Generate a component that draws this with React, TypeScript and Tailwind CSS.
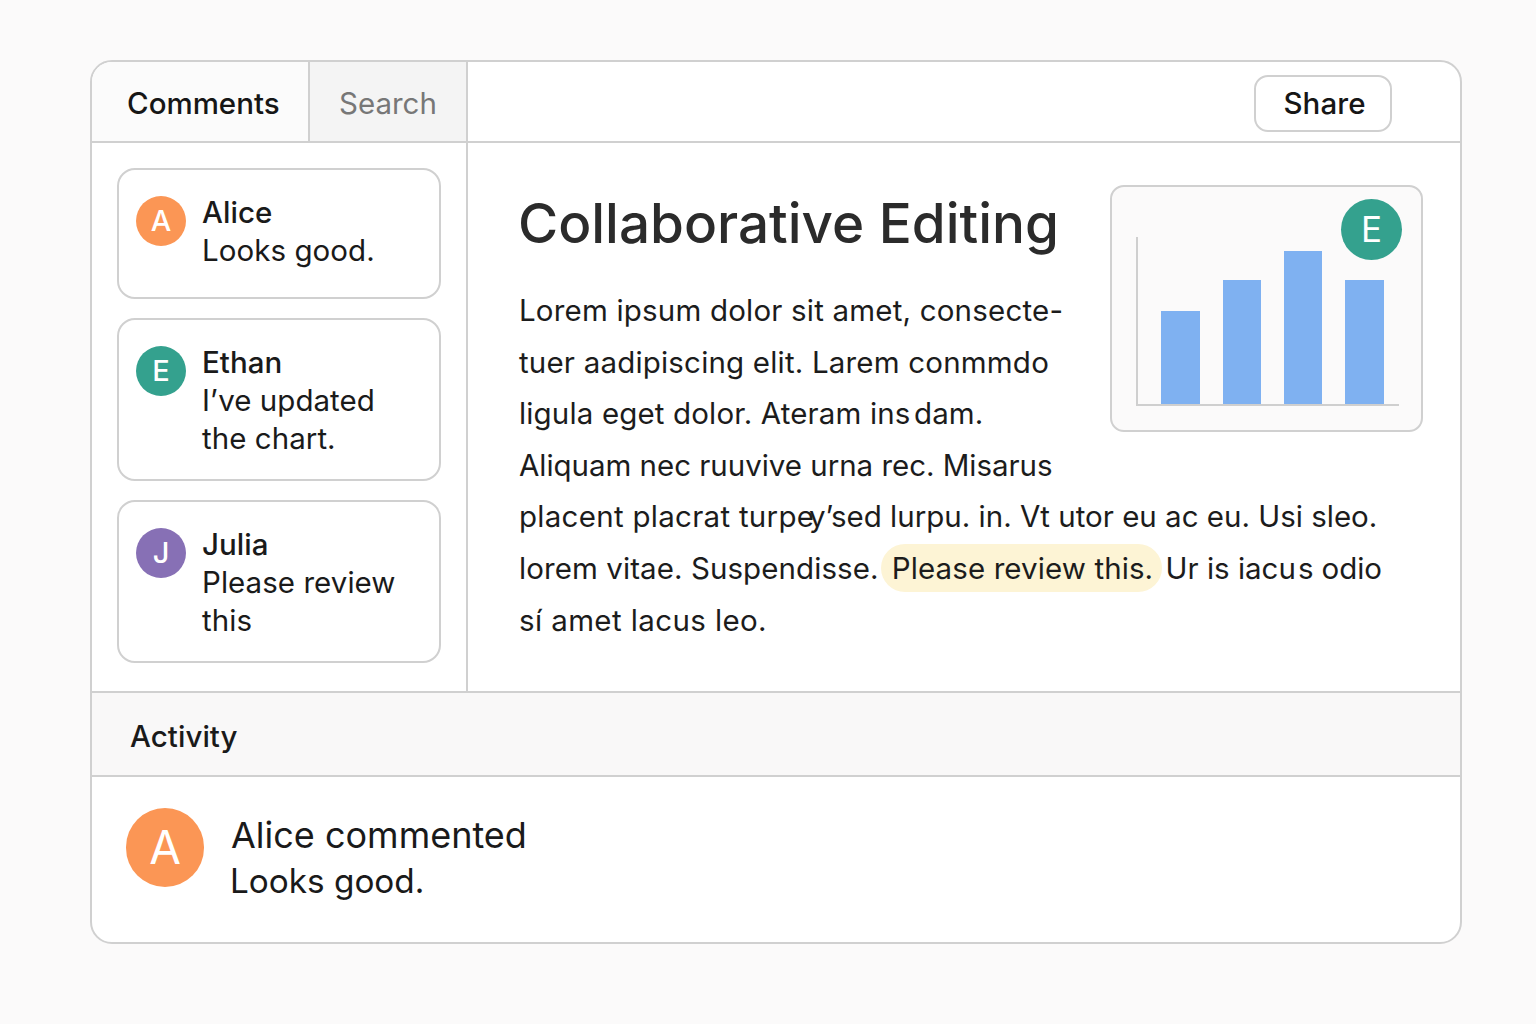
const font = "font-['Inter','Noto_Sans',sans-serif]";

const Avatar = ({ letter, color, size }: { letter: string; color: string; size: string }) => (
  <div className={`flex shrink-0 items-center justify-center rounded-full text-white ${color} ${size}`}>
    {letter}
  </div>
);

const CommentCard = ({ letter, color, name, lines, height }: { letter: string; color: string; name: string; lines: string[]; height: string }) => (
  <div className={`flex rounded-[18px] border-2 border-[#d0d0d0] bg-white pl-[17px] pt-[26px] ${height}`}>
    <Avatar letter={letter} color={color} size="h-[50px] w-[50px] text-[29px] font-medium" />
    <div className="ml-[16px] -mt-[3px] text-[29.5px] leading-[38px] tracking-[0.05px] text-[#1a1a1a]">
      <div className="font-medium">{name}</div>
      {lines.map((line) => (
        <div key={line}>{line}</div>
      ))}
    </div>
  </div>
);

export default function App() {
  return (
    <div className={`h-[1024px] w-[1536px] overflow-hidden bg-[#fbfafa] pl-[90px] pt-[60px] ${font}`}>
      <div className="flex h-[884px] w-[1372px] flex-col overflow-hidden rounded-[22px] border-2 border-[#d0d0d0] bg-white">
        {/* Header */}
        <div className="flex h-[81px] shrink-0 border-b-2 border-[#d0d0d0]">
          <div className="flex w-[218px] items-center border-r-2 border-[#d0d0d0] bg-[#fbfbfb] pl-[35px] pt-[3px] text-[29.5px] font-medium text-[#161616]">
            Comments
          </div>
          <div className="flex w-[158px] items-center border-r-2 border-[#d0d0d0] bg-[#f4f4f4] pl-[29px] pt-[3px] text-[29.5px] text-[#777777]">
            Search
          </div>
          <div className="flex flex-1 items-center justify-end pr-[68px] pt-[3px]">
            <div className="flex h-[57px] w-[138px] items-center justify-center rounded-[14px] border-2 border-[#d0d0d0] pl-[3px] text-[29.5px] font-medium tracking-[0.1px] text-[#161616]">
              Share
            </div>
          </div>
        </div>

        {/* Body */}
        <div className="flex h-[548px] shrink-0">
          <div className="flex w-[376px] shrink-0 flex-col gap-[19px] border-r-2 border-[#d0d0d0] pl-[25px] pr-[25px] pt-[25px]">
            <CommentCard letter="A" color="bg-[#fb9655]" name="Alice" lines={["Looks good."]} height="h-[131px]" />
            <CommentCard letter="E" color="bg-[#34a18e]" name="Ethan" lines={["I’ve updated", "the chart."]} height="h-[163px]" />
            <CommentCard letter="J" color="bg-[#8770b5]" name="Julia" lines={["Please review", "this"]} height="h-[163px]" />
          </div>

          <div className="flex-1 pl-[51px] pt-[43px] text-[29.5px] leading-[51.6px] text-[#1c1c1c]">
            <div className="flex">
              <div className="w-[591px] shrink-0">
                <h1 className="-mt-[1px] mb-[24px] -ml-[1px] text-[54.8px] font-medium leading-[76px] text-[#2b2b2b]">Collaborative Editing</h1>
                <div className="tracking-[0.19px]">Lorem ipsum dolor sit amet, consecte-</div>
                <div className="tracking-[0.19px]">tuer aadipiscing elit. Larem conmmdo</div>
                <div className="tracking-[0.15px]">ligula eget dolor. Ateram in<span className="tracking-[-2.4px]">s </span>dam.</div>
                <div className="tracking-[-0.03px]">Aliquam nec ruuvive urna rec. Misarus</div>
              </div>
              <div className="relative -mt-[1px] h-[247px] w-[313px] shrink-0 rounded-[14px] border-2 border-[#d0d0d0] bg-[#fbfafa]">
                <svg className="h-full w-full" viewBox="0 0 309 243">
                  <rect x="49" y="124" width="39" height="93" fill="#7fb1f1" />
                  <rect x="111" y="93" width="38" height="124" fill="#7fb1f1" />
                  <rect x="172" y="64" width="38" height="153" fill="#7fb1f1" />
                  <rect x="233" y="93" width="39" height="124" fill="#7fb1f1" />
                  <path d="M25 50V218H287" fill="none" stroke="#cfcfcf" strokeWidth="2" />
                </svg>
                <div className="absolute right-[19px] top-[12px]">
                  <Avatar letter="E" color="bg-[#34a18e]" size="h-[61px] w-[61px] text-[35px]" />
                </div>
              </div>
            </div>
            <div className="whitespace-nowrap">
              <span className="tracking-[0.28px]">placent placrat turp</span>
              <span className="tracking-[-5px]">e</span>y’sed lurpu. in. Vt utor eu ac eu. Usi sleo.
            </div>
            <div className="whitespace-nowrap">
              <span className="tracking-[0.08px]">lorem vitae. Suspendisse.</span>{" "}
              <span className="-ml-[6px] -mr-[5px] rounded-[24px] bg-[#fdf4d5] py-[6px] pl-[11px] pr-[9px] tracking-[0.1px]">Please review this.</span>{" "}
              Ur is iacu<span className="ml-[2px] tracking-[-0.1px]">s odio</span>
            </div>
            <div className="tracking-[0.39px]">sí amet lacus leo.</div>
          </div>
        </div>

        {/* Activity */}
        <div className="flex h-[86px] shrink-0 items-center border-y-2 border-[#d0d0d0] bg-[#f9f8f8] pl-[38px] pt-[4px] text-[29.5px] font-medium tracking-[0.05px] text-[#1a1a1a]">
          Activity
        </div>
        <div className="flex flex-1 pl-[34px] pt-[31px]">
          <Avatar letter="A" color="bg-[#fb9655]" size="h-[79px] w-[78px] text-[46px]" />
          <div className="ml-[27px] text-[#1a1a1a]">
            <div className="mt-[4px] text-[36px] leading-[46px]">Alice commented</div>
            <div className="-ml-[1px] mt-[1px] text-[33.3px] leading-[45px]">Looks good.</div>
          </div>
        </div>
      </div>
    </div>
  );
}
